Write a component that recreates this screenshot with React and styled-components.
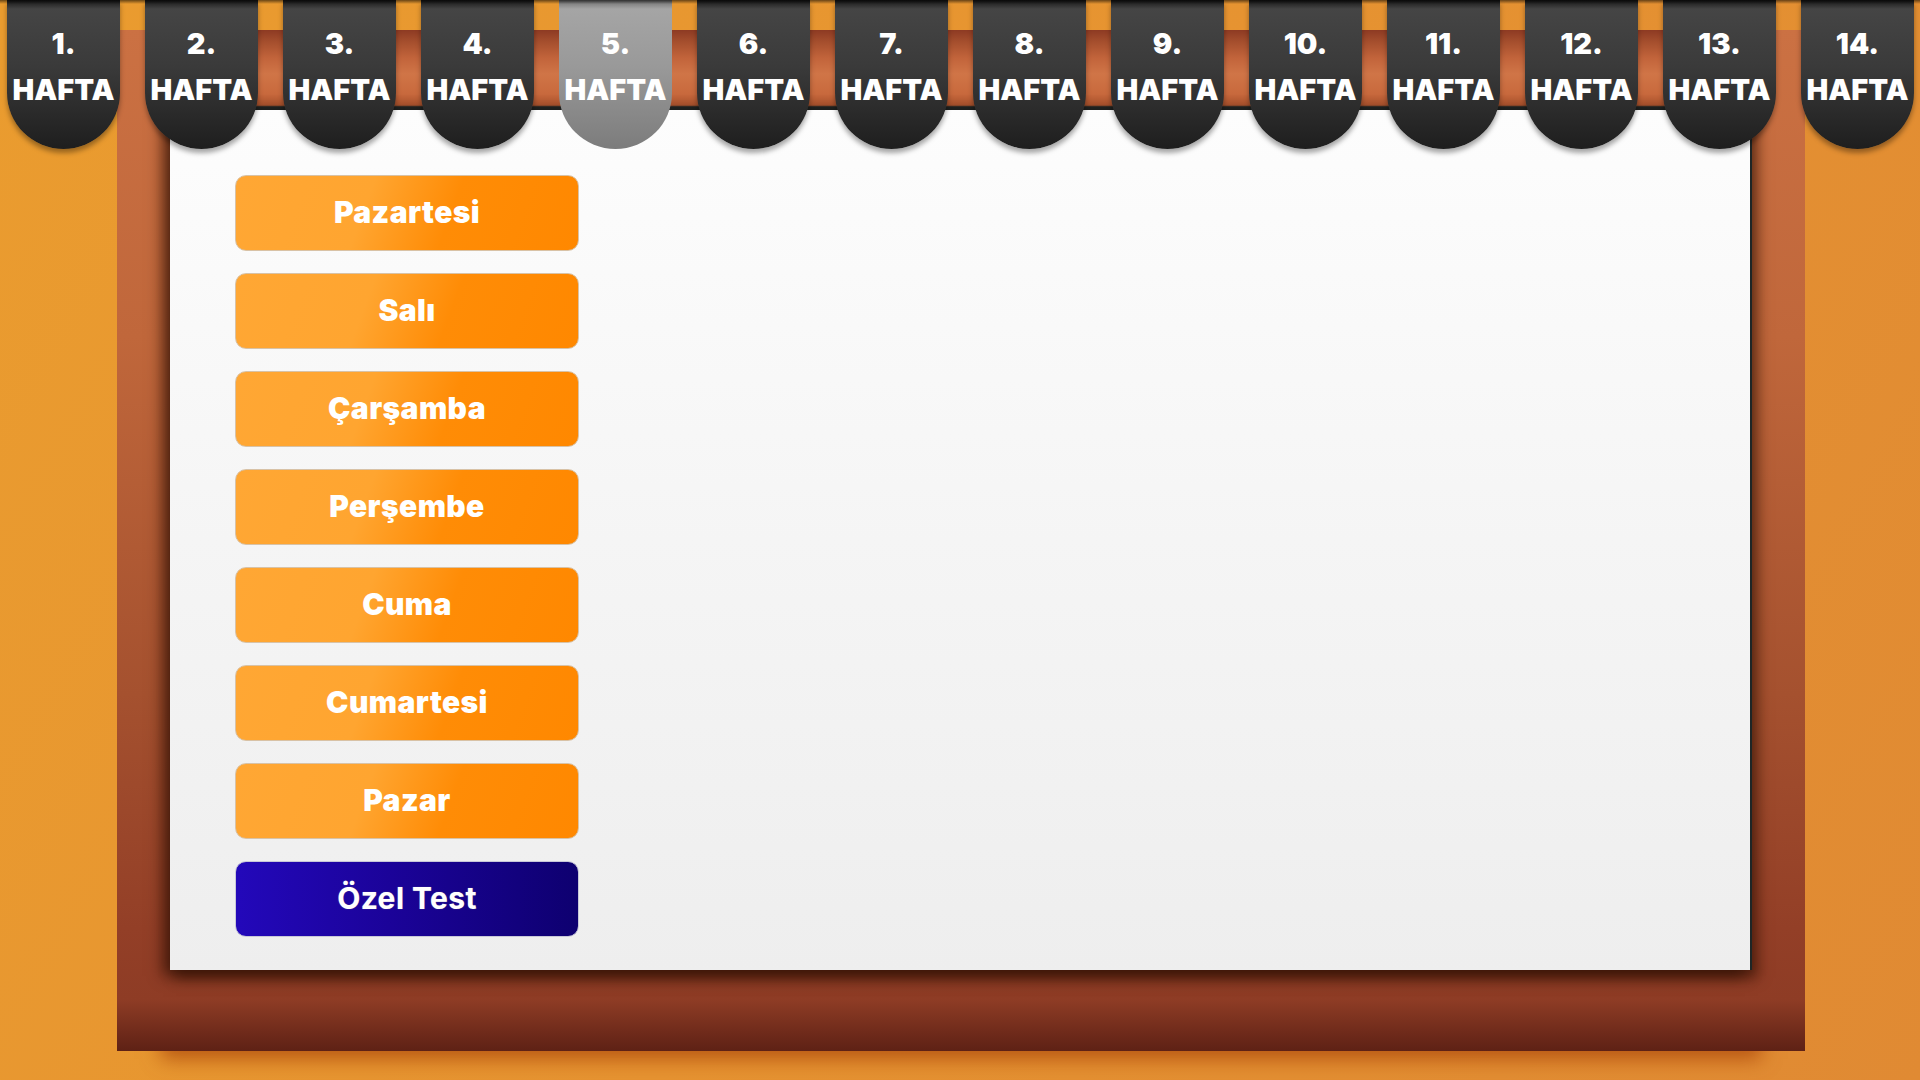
import React, { useState } from "react";
import styled, { createGlobalStyle, css } from "styled-components";

const GlobalStyle = createGlobalStyle`
  html, body {
    margin: 0;
    padding: 0;
    width: 1920px;
    height: 1080px;
    overflow: hidden;
  }
  body {
    font-family: Inter, "Open Sans", "DejaVu Sans", sans-serif;
  }
  * { box-sizing: border-box; }
`;

const Page = styled.div`
  position: relative;
  width: 1920px;
  height: 1080px;
  overflow: hidden;
  background: linear-gradient(120deg, #ea9c2f 0%, #e69331 50%, #e08a33 100%);
  padding: 30px 115px 0 117px;
`;

const TabBar = styled.nav`
  position: absolute;
  top: 0;
  left: 0;
  right: 0;
  z-index: 3;
  display: flex;
  gap: 25px;
  padding-left: 7px;
  &::before {
    content: "";
    position: absolute;
    top: 0;
    left: 0;
    right: 0;
    height: 4px;
    background: linear-gradient(to bottom, rgba(0, 0, 0, 0.55), rgba(0, 0, 0, 0));
    z-index: 1;
  }
`;

const Tab = styled.button`
  position: relative;
  flex: 0 0 113px;
  height: 149px;
  border: none;
  margin: 0;
  padding: 21px 0 0;
  display: flex;
  flex-direction: column;
  justify-content: flex-start;
  align-items: center;
  border-radius: 0 0 56.5px 56.5px / 0 0 56px 56px;
  color: #ffffff;
  font-family: Inter, "Open Sans", sans-serif;
  font-weight: 900;
  font-size: 29px;
  line-height: 46px;
  text-align: center;
  cursor: pointer;
  box-shadow: 0 4px 5px rgba(0, 0, 0, 0.35);
  background: linear-gradient(to bottom, #151515 0px, #454545 9px, #3a3a3a 45%, #1e1e1e 100%);
  ${(p) =>
    p.$active &&
    css`
      background: linear-gradient(to bottom, #6a6a6a 0px, #a5a5a5 9px, #999999 45%, #7c7c7c 100%);
      box-shadow: none;
    `}
`;

const TabLine = styled.span`
  display: block;
  letter-spacing: 0px;
`;

const Frame = styled.div`
  position: relative;
  width: 1688px;
  height: 1021px;
  padding: 0 53px 0 53px;
  display: flex;
  flex-direction: column;
  background: linear-gradient(
    to bottom,
    #cb7143 0%,
    #c0673b 30%,
    #a5512f 65%,
    #933f27 88%,
    #8e3c25 95%,
    #5e2115 100%
  );
  box-shadow: 0 52px 18px -44px rgba(170, 70, 10, 0.75);
`;

const Band = styled.div`
  flex: 0 0 80px;
  background: linear-gradient(
    to bottom,
    #8d3a23 0%,
    #a44e2d 14%,
    #c2643b 35%,
    #d07547 55%,
    #c8693d 80%,
    #a9522d 94%,
    #1c2525 96%,
    #1c2525 100%
  );
`;

const Paper = styled.main`
  flex: 0 0 860px;
  background: linear-gradient(to bottom, #fdfdfd 0%, #f5f5f5 50%, #eeeeee 100%);
  border-right: 2px solid #1e2626;
  box-shadow: -7px 6px 14px rgba(50, 18, 5, 0.8), 6px 8px 12px rgba(50, 18, 5, 0.6);
  padding: 65px 0 0 65px;
  display: flex;
  flex-direction: column;
  gap: 22px;
`;

const DayButton = styled.button`
  width: 344px;
  height: 76px;
  border-radius: 11px;
  border: 1px solid #d8c2a6;
  color: #ffffff;
  font-family: Inter, "Open Sans", sans-serif;
  font-weight: 900;
  font-size: 30px;
  letter-spacing: 0.4px;
  cursor: pointer;
  display: flex;
  align-items: center;
  justify-content: center;
  padding: 0 0 2px;
  background: linear-gradient(110deg, #ffa734 0%, #ffa530 38%, #ff8c06 62%, #ff8800 100%);
  ${(p) =>
    p.$special &&
    css`
      border: 1px solid #c8c8d8;
      font-weight: 700;
      letter-spacing: 0.4px;
      background: linear-gradient(90deg, #2308ba 0%, #1b0399 45%, #0e0070 100%);
      text-shadow: 0 0 1px rgba(150, 150, 150, 0.9);
    `}
`;

const weeks = Array.from({ length: 14 }, (_, i) => i + 1);
const days = ["Pazartesi", "Salı", "Çarşamba", "Perşembe", "Cuma", "Cumartesi", "Pazar"];

export default function App() {
  const [active, setActive] = useState(5);
  return (
    <>
      <GlobalStyle />
      <Page>
        <TabBar>
          {weeks.map((w) => (
            <Tab key={w} $active={w === active} onClick={() => setActive(w)}>
              <TabLine>{w}.</TabLine>
              <TabLine>HAFTA</TabLine>
            </Tab>
          ))}
        </TabBar>
        <Frame>
          <Band />
          <Paper>
            {days.map((d) => (
              <DayButton key={d}>{d}</DayButton>
            ))}
            <DayButton $special>Özel Test</DayButton>
          </Paper>
        </Frame>
      </Page>
    </>
  );
}
